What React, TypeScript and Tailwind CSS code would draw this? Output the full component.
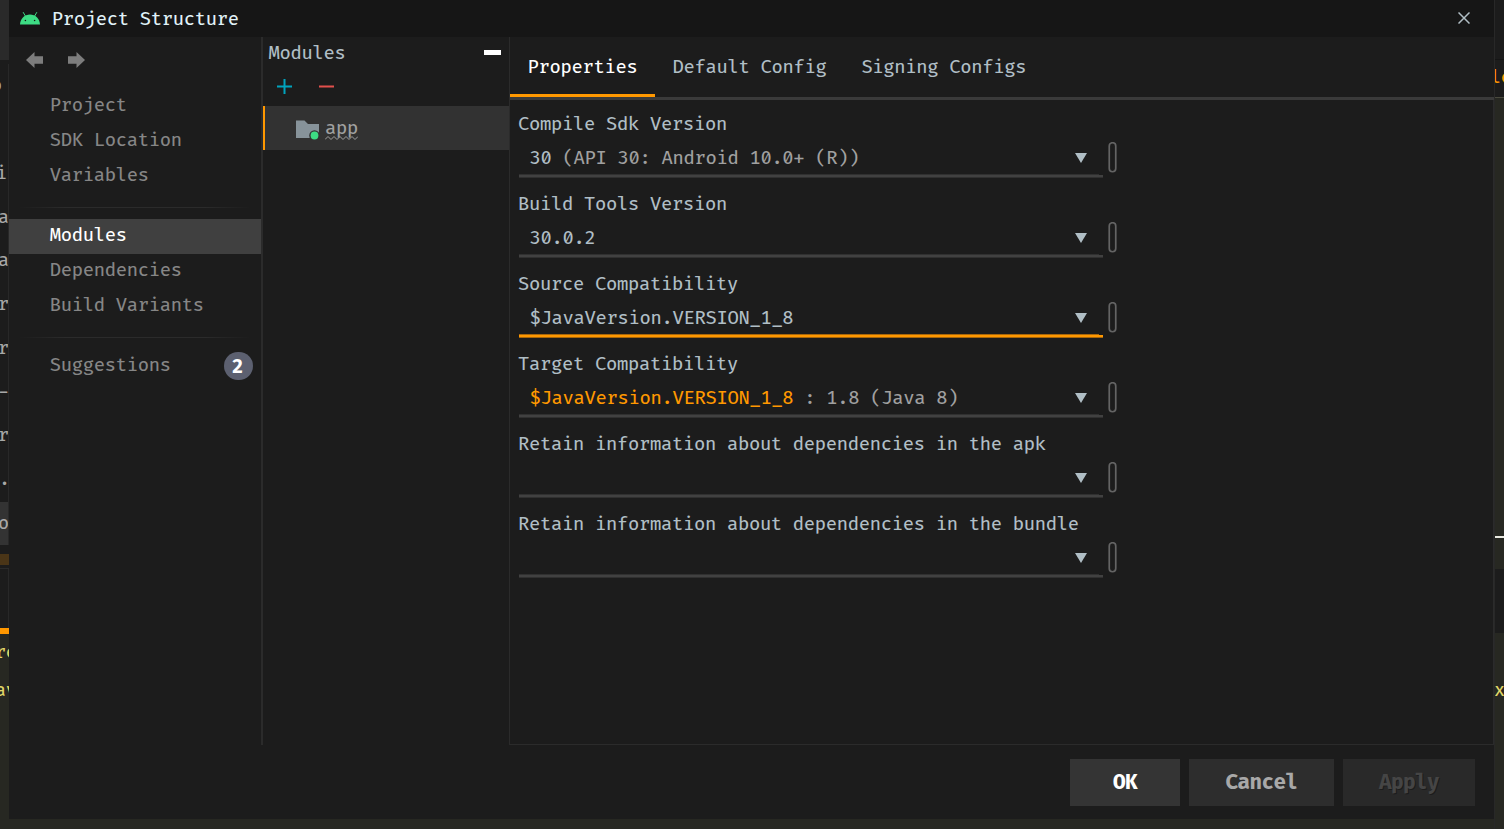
import type { ReactNode } from "react";

const mono = "font-['Fira_Code','DejaVu_Sans_Mono',monospace]";

const editorLines = ["o", "", "i;", "a", "a", "r", "r", "-", "r", ".", "o"];

function LeftStrip() {
  return (
    <div className="flex h-full w-[9px] shrink-0 flex-col overflow-hidden bg-[#1c1c1c] text-[#a8a8a8]">
      <div className="h-[60px] shrink-0 bg-[#2a2a2a]" />
      <div className="h-1 shrink-0" />
      {editorLines.map((line, i) => (
        <div
          key={i}
          className={`flex h-[43.75px] w-[9px] shrink-0 items-center overflow-hidden border-r border-[#282828] pt-px text-[18px] ${
            i === 10 ? "bg-[#333333]" : ""
          }`}
        >
          <span className={i === 0 ? "-ml-[9px]" : i === 2 ? "-ml-[4px]" : i === 9 ? "-ml-[1px]" : "-ml-[2px]"}>{line}</span>
        </div>
      ))}
      <div className="h-[9px] shrink-0" />
      <div className="h-[11px] shrink-0 bg-[#4a3517]" />
      <div className="mt-[3px] h-px shrink-0 bg-[#2b2b2b]" />
      <div className="h-[59px] shrink-0 border-r border-[#282828]" />
      <div className="h-[6px] shrink-0 bg-[#ff9800]" />
      <div className="flex-1 bg-[#272822] text-[18px] text-[#e0d768]">
        <div className="h-[38px] leading-[38px]">
          <span className="-ml-[5px]">re</span>
        </div>
        <div className="h-[38px] leading-[38px]">
          <span className="-ml-[5px]">av</span>
        </div>
      </div>
    </div>
  );
}

function RightStrip() {
  return (
    <div className="flex h-full w-[10px] shrink-0 flex-col overflow-hidden border-l border-[#282828] bg-[#272822]">
      <div className="h-[98px] shrink-0 border-b border-[#4a4a3e] bg-[#1c1c1c] text-[18px] text-[#ff9800]">
        <div className="h-[60px] border-b border-[#151515]" />
        <div className="h-[36px] leading-[36px]">
          <span className="-ml-[5px]">le</span>
        </div>
      </div>
      <div className="h-[438px] shrink-0" />
      <div className="h-[2px] shrink-0 bg-[#e8e8e0]" />
      <div className="h-[31px] shrink-0" />
      <div className="h-[64px] shrink-0 bg-[#1c1c1c]" />
      <div className="mt-[39px] h-[38px] text-[18px] leading-[38px] text-[#e0d768]">
        <span className="-ml-px">x</span>
      </div>
    </div>
  );
}

function AndroidIcon() {
  return (
    <svg width="20" height="13" viewBox="0 0 20 13" className="shrink-0">
      <path d="M3.3.5 5.5 4.2M16.7.5l-2.2 3.7" stroke="#3ddc84" strokeWidth="1" strokeLinecap="round" />
      <path d="M0 12.5C.4 6.5 4.6 2.6 10 2.6s9.600 3.900 10 9.900z" fill="#3ddc84" />
      <circle cx="5.4" cy="8.500" r=".8" fill="#161616" />
      <circle cx="14.600" cy="8.500" r=".8" fill="#161616" />
    </svg>
  );
}

function ArrowIcon({ flip = false }: { flip?: boolean }) {
  return (
    <svg width="17" height="16" viewBox="0 0 17 16" className={flip ? "-scale-x-100" : ""}>
      <path d="M0 8 8.500 0v4.200H17v7.600H8.500V16z" fill="#7d7d7d" />
    </svg>
  );
}

function NavItem({ label, active = false, children }: { label: string; active?: boolean; children?: ReactNode }) {
  return (
    <div
      className={`flex h-[35px] items-center justify-between pr-2 pl-[40.8px] leading-[35px] ${
        active ? "bg-[#404040] text-white" : "text-[#868686]"
      }`}
    >
      <span className="-mt-[2px]">{label}</span>
      {children}
    </div>
  );
}

function Divider({ className }: { className: string }) {
  return (
    <div
      className={`mx-2.5 h-px bg-[linear-gradient(to_right,transparent,#2b2b2b_20%,#2b2b2b_80%,transparent)] ${className}`}
    />
  );
}

function Sidebar() {
  return (
    <div className="flex w-[252px] shrink-0 flex-col">
      <div className="flex h-[52px] gap-[25px] pt-[15px] pl-[17px]">
        <ArrowIcon />
        <ArrowIcon flip />
      </div>
      <NavItem label="Project" />
      <NavItem label="SDK Location" />
      <NavItem label="Variables" />
      <Divider className="mt-[13px] mb-[11px]" />
      <NavItem label="Modules" active />
      <NavItem label="Dependencies" />
      <NavItem label="Build Variants" />
      <Divider className="mt-[13px] mb-[11px]" />
      <NavItem label="Suggestions">
        <span className="-mt-px flex h-7 w-[29px] items-center justify-center rounded-full bg-[#5c6070] pt-px pr-[2px] text-[19px] leading-7 font-bold text-white">
          2
        </span>
      </NavItem>
    </div>
  );
}

function ModulesPanel() {
  return (
    <div className="flex w-[248px] shrink-0 flex-col border-l-2 border-[#2b2b2b] text-[#b0bec5]">
      <div className="flex h-[33px] items-center justify-between pr-2 pl-[5.5px]">
        <span>Modules</span>
        <div className="mt-[-2px] h-[5px] w-[17px] bg-white" />
      </div>
      <div className="flex h-9 items-start pt-[9px] pl-[14px]">
        <svg width="57" height="15" viewBox="0 0 57 15" fill="none" strokeWidth="2">
          <path d="M0 7.500h15M7.500 0v15" stroke="#00a3bd" />
          <path d="M42 7.500h15" stroke="#e2504c" />
        </svg>
      </div>
      <div className="flex h-11 items-center border-l-2 border-[#ff9800] bg-[#323232] pl-[31px]">
        <svg width="23" height="20" viewBox="0 0 23 20" className="mt-[3px] mr-[6px]">
          <path d="M0 .5h8.500L12 4h11v14H0z" fill="#87939a" />
          <circle cx="18.500" cy="15.500" r="5.300" fill="#323232" />
          <circle cx="18.500" cy="15.500" r="3.900" fill="#3ddc84" />
        </svg>
        <div className="flex h-11 flex-col pt-[13px] text-[#a0a0a0]">
          <span className="h-[17px] leading-[20px]">app</span>
          <svg width="33" height="4" viewBox="0 0 33 4" fill="none" stroke="#a0a0a0" className="shrink-0">
            <path d="M0 3.500 3 .5l3 3 3-3 3 3 3-3 3 3 3-3 3 3 3-3 3 3 3-3" />
          </svg>
        </div>
      </div>
    </div>
  );
}

function Field({ label, children, focused = false }: { label: string; children?: ReactNode; focused?: boolean }) {
  const line = focused ? "bg-[#ff9800] border-[#a8670c]" : "bg-[#414141] border-[#303030]";
  return (
    <div className="h-20 pl-2">
      <div className="h-[31px] pt-px leading-[31px] text-[#b0bec5]">{label}</div>
      <div className="flex">
        <div className="ml-px w-[584px]">
          <div className="flex h-[35px] items-center justify-between pr-4 pl-[10.5px]">
            <span className="mt-[5px] whitespace-pre text-[#b0bec5]">{children}</span>
            <svg width="12" height="10" viewBox="0 0 12 10" className="mt-[3px]">
              <path d="M0 0h12L6 10z" fill="#b0bec5" />
            </svg>
          </div>
          <div className="flex h-1 items-end">
            <div className={`h-1 w-[580px] border-y ${line}`} />
            <div className={`h-[3px] w-[4px] border-b ${line}`} />
          </div>
        </div>
        <svg width="9" height="31" viewBox="0 0 9 31" className="mt-[3px] ml-[5px]" fill="none">
          <rect x="1.250" y=".75" width="6.500" height="29" rx="3.250" stroke="#646464" strokeWidth="1.700" />
        </svg>
      </div>
    </div>
  );
}

function Tab({ label, active = false }: { label: string; active?: boolean }) {
  return (
    <div
      className={`flex h-[60px] items-center border-b-[3px] pt-1 pr-[17.5px] pl-[17.5px] ${
        active ? "border-[#ff9800] text-white" : "border-transparent text-[#b0bec5]"
      }`}
    >
      {label}
    </div>
  );
}

function Properties() {
  return (
    <div className="flex min-w-0 flex-1 flex-col border-b border-l border-[#2b2b2b]">
      <div className="flex h-[63px] border-b-[3px] border-b-[#3a3a3a]">
        <Tab label="Properties" active />
        <Tab label="Default Config" />
        <Tab label="Signing Configs" />
      </div>
      <div className="flex-1 border-r border-[#2b2b2b] pt-2">
        <Field label="Compile Sdk Version">
          30 <span className="text-[#a0a0a0]">(API 30: Android 10.0+ (R))</span>
        </Field>
        <Field label="Build Tools Version">30.0.2</Field>
        <Field label="Source Compatibility" focused>
          $JavaVersion.VERSION_1_8
        </Field>
        <Field label="Target Compatibility">
          <span className="text-[#ff9800]">$JavaVersion.VERSION_1_8</span>
          <span className="text-[#a0a0a0]"> : 1.8 (Java 8)</span>
        </Field>
        <Field label="Retain information about dependencies in the apk" />
        <Field label="Retain information about dependencies in the bundle" />
      </div>
    </div>
  );
}

function Dialog() {
  return (
    <div className="flex h-[819px] w-[1485px] shrink-0 flex-col bg-[#1c1c1c]">
      <header className="flex h-[37px] shrink-0 items-center bg-[#161616] pl-[11px] text-[#e0f2f8]">
        <AndroidIcon />
        <h1 className="ml-[11.8px] flex-1 pt-[2px]">Project Structure</h1>
        <svg width="12" height="12" viewBox="0 0 12 12" className="-mt-px mr-6" fill="none" stroke="#b0bec5" strokeWidth="1.500">
          <path d="m.5.5 11 11M11.500.5l-11 11" />
        </svg>
      </header>
      <div className="flex h-[708px] shrink-0">
        <Sidebar />
        <ModulesPanel />
        <Properties />
      </div>
      <footer className="flex flex-1 justify-end gap-[9px] pt-[14px] pr-[19px] text-[20.5px] leading-[47px] font-bold tracking-[-0.6px]">
        <button className="h-[47px] w-[110px] bg-[#343434] text-white">OK</button>
        <button className="h-[47px] w-[145px] bg-[#2d2d2d] text-[#a8a8a8]">Cancel</button>
        <button className="h-[47px] w-[132px] bg-[#292929] text-[#454545] [text-shadow:1px_1px_0_#1c1c1c]">Apply</button>
      </footer>
    </div>
  );
}

export default function App() {
  return (
    <div className={`flex h-[829px] w-[1504px] overflow-hidden bg-[#272822] text-[18.4px] leading-6 font-[450] tracking-[-0.323px] ${mono}`}>
      <LeftStrip />
      <Dialog />
      <RightStrip />
    </div>
  );
}
